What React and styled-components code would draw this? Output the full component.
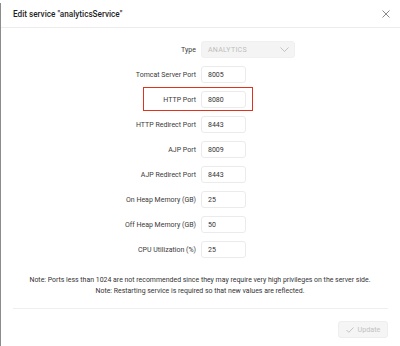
import React from "react";
import styled, { createGlobalStyle } from "styled-components";

const GlobalStyle = createGlobalStyle`
  html, body {
    margin: 0;
    padding: 0;
    background: #ffffff;
  }
  body {
    font-family: Roboto, "Liberation Sans", sans-serif;
    -webkit-font-smoothing: antialiased;
  }
`;

const Page = styled.div`
  width: 400px;
  height: 346px;
  box-sizing: border-box;
  position: relative;
  background: #fff;
  overflow: hidden;
  &::before {
    content: "";
    position: absolute;
    left: 0;
    top: 3px;
    bottom: 0;
    width: 1px;
    background: #8c8c8c;
  }
`;

const Header = styled.header`
  display: flex;
  align-items: center;
  justify-content: space-between;
  height: 27px;
  padding: 0 8px 0 13px;
  border-bottom: 1px solid #ececec;
`;

const Title = styled.h1`
  margin: 0;
  font-size: 8.2px;
  font-weight: 500;
  color: #1f1f1f;
`;

const CloseButton = styled.button`
  border: none;
  background: none;
  padding: 0;
  width: 12px;
  height: 12px;
  display: flex;
  align-items: center;
  justify-content: center;
  color: #8a8a8a;
  cursor: pointer;
`;

const Form = styled.div`
  display: flex;
  flex-direction: column;
  padding-top: 9px;
`;

const Row = styled.div`
  position: relative;
  display: grid;
  grid-template-columns: 196px auto;
  column-gap: 5px;
  align-items: center;
  height: 25px;
`;

const Label = styled.label`
  text-align: right;
  font-size: 7px;
  color: #3a3a3a;
`;

const Input = styled.div`
  box-sizing: border-box;
  width: ${(p) => p.width || 45}px;
  height: 17px;
  border: 1px solid #ebebeb;
  border-radius: 3px;
  padding: 0 6px;
  display: flex;
  align-items: center;
  font-size: 7px;
  color: #333;
`;

const Select = styled(Input)`
  background: #f4f4f4;
  border-color: #f0f0f0;
  color: #bdbdbd;
  justify-content: space-between;
  letter-spacing: 0.3px;
  padding-right: 5px;
`;

const Highlight = styled.div`
  position: absolute;
  left: 143px;
  top: 0;
  width: 110px;
  height: 24px;
  box-sizing: border-box;
  border: 1.5px solid #e0331f;
  pointer-events: none;
`;

const Notes = styled.div`
  margin-top: 13px;
  text-align: center;
  font-size: 6.95px;
  line-height: 11px;
  color: #333;
`;

const Footer = styled.footer`
  margin: 11px 12px 0 13px;
  padding-top: 12px;
  border-top: 1px solid #efefef;
  display: flex;
  justify-content: flex-end;
`;

const UpdateButton = styled.button`
  box-sizing: border-box;
  width: 50px;
  height: 17px;
  border: 1px solid #eeeeee;
  border-radius: 3px;
  background: #f5f5f5;
  color: #c2c2c2;
  font-family: inherit;
  font-size: 7.2px;
  display: flex;
  align-items: center;
  justify-content: center;
  gap: 4px;
  padding: 0;
`;

const fields = [
  { label: "Tomcat Server Port", value: "8005" },
  { label: "HTTP Port", value: "8080", highlight: true },
  { label: "HTTP Redirect Port", value: "8443" },
  { label: "AJP Port", value: "8009" },
  { label: "AJP Redirect Port", value: "8443" },
  { label: "On Heap Memory (GB)", value: "25" },
  { label: "Off Heap Memory (GB)", value: "50" },
  { label: "CPU Utilization (%)", value: "25" },
];

const App = () => {
  return (
    <Page>
      <GlobalStyle />
      <Header>
        <Title>Edit service "analyticsService"</Title>
        <CloseButton aria-label="close">
          <svg width="8" height="8" viewBox="0 0 8 8" fill="none" stroke="currentColor" strokeWidth="1">
            <path d="M0.5 0.5L7.5 7.5M7.5 0.5L0.5 7.5" />
          </svg>
        </CloseButton>
      </Header>
      <Form>
        <Row>
          <Label>Type</Label>
          <Select width={94}>
            ANALYTICS
            <svg width="9" height="5" viewBox="0 0 9 5" fill="none" stroke="#b5b5b5" strokeWidth="0.8">
              <path d="M0.5 0.5L4.5 4.5L8.5 0.5" />
            </svg>
          </Select>
        </Row>
        {fields.map((f) => (
          <Row key={f.label}>
            <Label>{f.label}</Label>
            <Input>{f.value}</Input>
            {f.highlight && <Highlight />}
          </Row>
        ))}
      </Form>
      <Notes>
        Note: Ports less than 1024 are not recommended since they may require very high privileges on the server side.
        <br />
        Note: Restarting service is required so that new values are reflected.
      </Notes>
      <Footer>
        <UpdateButton disabled>
          <svg width="8" height="6" viewBox="0 0 8 6" fill="none" stroke="#bdbdbd" strokeWidth="0.9">
            <path d="M0.5 3L2.8 5.3L7.5 0.5" />
          </svg>
          Update
        </UpdateButton>
      </Footer>
    </Page>
  );
};

export default App;
